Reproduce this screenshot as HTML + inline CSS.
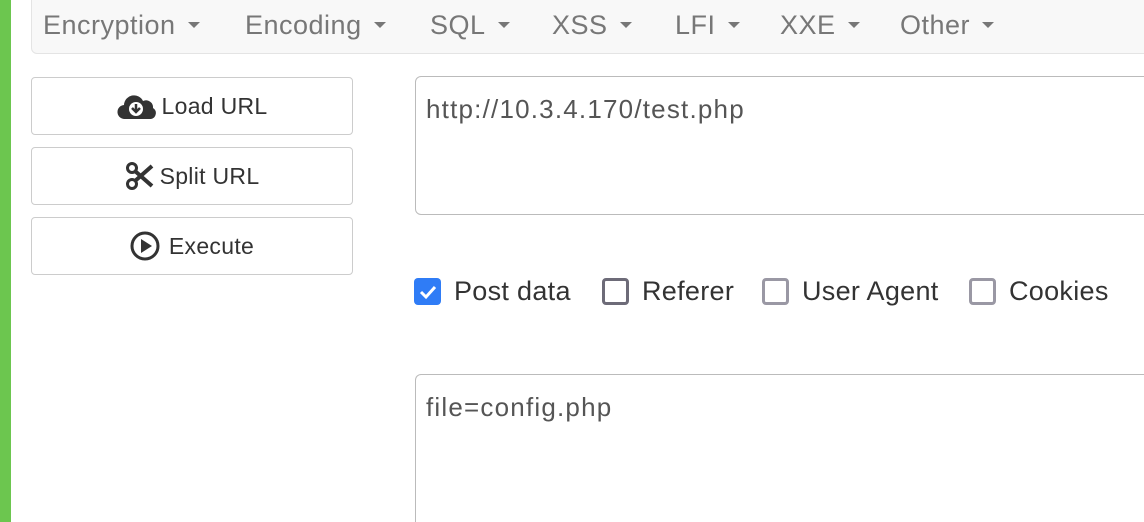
<!DOCTYPE html>
<html style="overflow:hidden;height:522px"><head><style>
body{margin:0;width:1144px;height:522px;overflow:hidden;background:#fff;font-family:"Liberation Sans",sans-serif;position:relative}
.g{position:absolute;left:0;top:0;width:11px;height:522px;background:#6cc64f}
.nav{position:absolute;left:31px;top:-6px;width:1130px;height:60px;background:#f8f8f8;border:1px solid #e4e4e4;border-radius:6px;box-sizing:border-box}
.nav span{position:absolute;top:15px;font-size:27px;letter-spacing:0.5px;color:#777}
.nav span:after{content:"";display:inline-block;margin-left:12px;vertical-align:middle;border-left:6px solid transparent;border-right:6px solid transparent;border-top:6px solid #777;position:relative;top:-2px}
.btn{position:absolute;left:31px;width:322px;height:58px;border:1px solid #ccc;border-radius:4px;box-sizing:border-box;display:flex;align-items:center;justify-content:center;font-size:23px;letter-spacing:0.3px;color:#333}
.btn svg{margin-right:5px}
.ta{position:absolute;left:415px;width:760px;border:1px solid #bbb;border-radius:6px;box-sizing:border-box;font-size:26px;letter-spacing:1.2px;color:#555;padding:17px 10px;overflow:hidden}
.cb{position:absolute;top:276px;font-size:27px;letter-spacing:0.3px;color:#333;display:flex;align-items:center}
.box{width:27px;height:27px;box-sizing:border-box;border:3px solid #777;border-radius:4px;margin-right:13px}
</style></head><body>
<div class="g"></div>
<div class="nav">
<span style="left:11px">Encryption</span><span style="left:213px">Encoding</span><span style="left:398px">SQL</span><span style="left:520px">XSS</span><span style="left:643px">LFI</span><span style="left:748px">XXE</span><span style="left:868px">Other</span>
</div>
<div class="btn" style="top:77px"><svg width="40" height="30" viewBox="0 0 40 30"><path d="M8 28a7 7 0 0 1-1-14 10 10 0 0 1 19-4 7 7 0 0 1 10 7 6 6 0 0 1-2 11z" fill="#333"/><circle cx="19" cy="18" r="7" fill="#fff"/><path d="M19 13v8M15 17l4 4 4-4" stroke="#333" stroke-width="2.5" fill="none"/></svg>Load URL</div>
<div class="btn" style="top:147px"><svg width="30" height="28" viewBox="0 0 30 28"><circle cx="7" cy="6" r="4.5" fill="none" stroke="#333" stroke-width="3"/><circle cx="7" cy="22" r="4.5" fill="none" stroke="#333" stroke-width="3"/><path d="M10 9L27 24M10 19L27 4" stroke="#333" stroke-width="4"/></svg>Split URL</div>
<div class="btn" style="top:217px"><svg width="34" height="30" viewBox="0 0 34 30"><circle cx="15" cy="15" r="13" fill="none" stroke="#333" stroke-width="3"/><path d="M11 8v14l11-7z" fill="#333"/></svg>Execute</div>
<div class="ta" style="top:76px;height:139px">http://10.3.4.170/test.php</div>
<div class="cb" style="left:414px"><div class="box" style="background:#2f7cf6;border:none;display:flex;align-items:center;justify-content:center"><svg width="18" height="16"><path d="M2 8l5 5 9-10" stroke="#fff" stroke-width="3" fill="none"/></svg></div>Post data</div>
<div class="cb" style="left:602px"><div class="box" style="border-color:#6d6b78"></div>Referer</div>
<div class="cb" style="left:762px"><div class="box" style="border-color:#9a98a4"></div>User Agent</div>
<div class="cb" style="left:969px"><div class="box" style="border-color:#9a98a4"></div>Cookies</div>
<div class="ta" style="top:374px;height:148px;border-bottom:none;border-radius:6px 0 0 0">file=config.php</div>
</body></html>
